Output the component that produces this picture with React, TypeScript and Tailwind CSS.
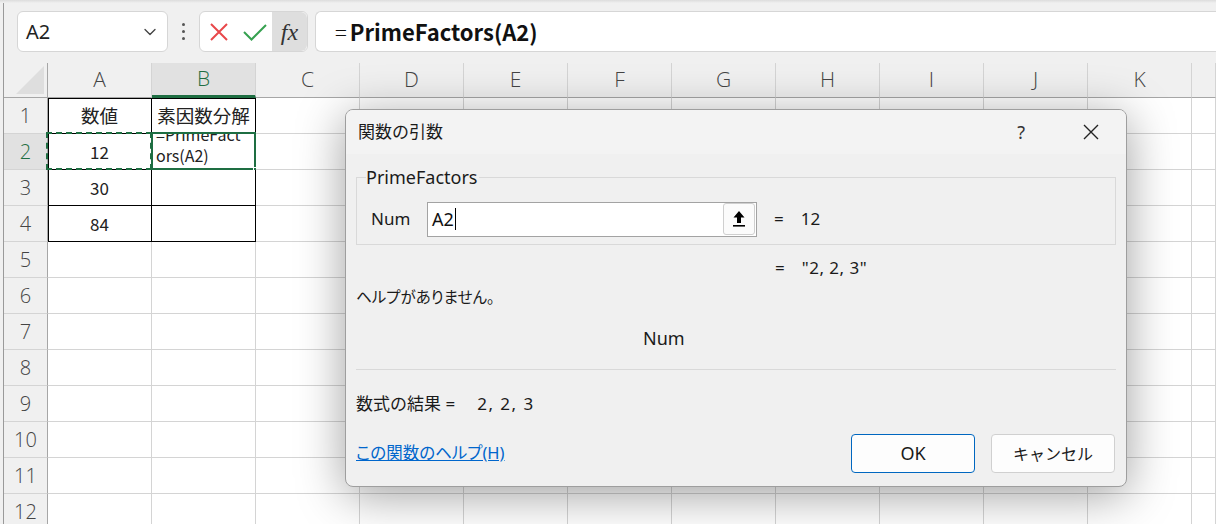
import { ChevronDown } from "lucide-react"

const COLS = ["A", "B", "C", "D", "E", "F", "G", "H", "I", "J", "K", ""]
const ROWS = [1, 2, 3, 4, 5, 6, 7, 8, 9, 10, 11, 12]

const VALUES: Record<string, string> = {
  A1: "数値",
  B1: "素因数分解",
  A2: "12",
  A3: "30",
  A4: "84",
}

const JP = "font-['Noto_Sans','Noto_Sans_CJK_JP',sans-serif]"
const CELL_FONT = "font-['Noto_Sans_CJK_JP','Noto_Sans',sans-serif]"

function Toolbar() {
  return (
    <div className="flex h-[63px] items-start gap-0 pt-[11px] pl-[13px]">
      {/* name box */}
      <div className="flex h-[41px] w-[151px] items-center justify-between rounded-md border border-[#d6d6d6] bg-white pl-[8px] pr-[7px]">
        <span className="font-['Noto_Sans',sans-serif] text-[20px] text-[#222]">A2</span>
        <ChevronDown className="size-[20px] text-[#444]" strokeWidth={1.6} />
      </div>
      <div className="flex h-[41px] w-[31px] flex-col items-center justify-center gap-[4px]">
        <span className="size-[3px] rounded-full bg-[#555]" />
        <span className="size-[3px] rounded-full bg-[#555]" />
        <span className="size-[3px] rounded-full bg-[#555]" />
      </div>
      {/* cancel / enter / fx */}
      <div className="flex h-[41px] w-[109px] items-center rounded-md border border-[#d6d6d6] bg-white">
        <div className="flex w-[38px] justify-center">
          <svg width="22" height="22" viewBox="0 0 22 22">
            <path d="M3 3 L19 19 M19 3 L3 19" stroke="#e8474a" strokeWidth="2" fill="none" />
          </svg>
        </div>
        <div className="flex w-[34px] justify-center">
          <svg width="26" height="20" viewBox="0 0 26 20">
            <path d="M2 10 L9.5 17.5 L24 3" stroke="#36a150" strokeWidth="2" fill="none" />
          </svg>
        </div>
        <div className="flex h-[39px] w-[35px] items-center justify-center rounded-r-md bg-[#dedede]">
          <span className="font-['Liberation_Serif',serif] text-[24px] italic leading-none text-[#333]">fx</span>
        </div>
      </div>
      {/* formula input */}
      <div className="ml-[7px] flex h-[41px] flex-1 items-center rounded-l-md border border-r-0 border-[#d6d6d6] bg-white pl-[19px]">
        <span className="font-['Noto_Sans_CJK_JP',sans-serif] text-[22px] text-[#111]">
          <span className="mr-[3px] font-light">=</span>
          <span className="font-bold">PrimeFactors(A2)</span>
        </span>
      </div>
    </div>
  )
}

function Sheet() {
  return (
    <div className="grid grid-cols-[44px_repeat(11,104px)_1fr] grid-rows-[35px_repeat(12,36px)]">
      {/* corner */}
      <div className="flex items-end justify-end border-r border-b border-[#a6a6a6] bg-[#f0f0f0] pr-[3px] pb-[3px]">
        <div className="size-[28px] bg-[#dedede] [clip-path:polygon(100%_0,100%_100%,0_100%)]" />
      </div>
      {COLS.map((c, i) => {
        const sel = c === "B"
        return (
          <div
            key={"h" + i}
            className={
              "flex items-center justify-center border-r border-[#d4d4d4] font-['Open_Sans',sans-serif] text-[21px] font-light " +
              (sel
                ? "border-b-[3px] border-b-[#1e6e42] bg-[#e1e1e1] text-[#1e6e42]"
                : "border-b border-b-[#a6a6a6] bg-[#f0f0f0] text-[#444]")
            }
          >
            {c}
          </div>
        )
      })}
      {ROWS.map((r) => (
        <Row key={r} r={r} />
      ))}
    </div>
  )
}

function Row({ r }: { r: number }) {
  const sel = r === 2
  return (
    <>
      <div
        className={
          "flex items-center justify-center border-r border-b border-r-[#a6a6a6] border-b-[#d4d4d4] font-['Open_Sans',sans-serif] text-[20px] font-light " +
          (sel ? "bg-[#e1e1e1] text-[#1e6e42]" : "bg-[#f0f0f0] text-[#444]")
        }
      >
        {r}
      </div>
      {COLS.map((c, i) => {
        const key = c + r
        const inTable = r <= 4 && i <= 1
        let edge = ""
        if (inTable) {
          if (i === 0 && r === 1) edge = "shadow-[inset_1px_1px_0_#000]"
          else if (i === 0) edge = "shadow-[inset_1px_0_0_#000]"
          else if (r === 1) edge = "shadow-[inset_0_1px_0_#000]"
        }
        const isHead = r === 1 && inTable
        return (
          <div
            key={key}
            className={
              "relative flex items-center justify-center border-r border-b bg-white " +
              (inTable ? "border-black " : "border-[#d4d4d4] ") +
              edge
            }
          >
            {key === "B2" ? (
              <>
                <div className={"absolute inset-0 flex flex-col justify-end overflow-hidden pl-[4px] pb-[3px] text-[16px] leading-[21px] text-[#222] " + CELL_FONT}>
                  <span>=PrimeFact</span>
                  <span>ors(A2)</span>
                </div>
                <div className="absolute -top-[2px] -left-[1px] -right-[1px] -bottom-[1px] border-2 border-[#1e6e42]" />
                <div className="absolute -right-[4px] -bottom-[4px] size-[6px] border border-white bg-[#1e6e42]" />
              </>
            ) : (
              <span className={(isHead ? "text-[18.5px] " : "text-[17px] ") + "text-[#222] " + CELL_FONT}>
                {VALUES[key] ?? ""}
              </span>
            )}
            {key === "A2" && (
              <div className="absolute -top-[2px] -left-[2px] -right-[1px] -bottom-[1px] border-2 border-dashed border-[#1e6e42]" />
            )}
          </div>
        )
      })}
    </>
  )
}

function Dialog() {
  return (
    <div
      className={
        "absolute left-[345px] top-[109px] flex h-[378px] w-[782px] flex-col overflow-hidden rounded-lg border border-[#9e9e9e] bg-[#f0f0f0] shadow-[0_8px_48px_rgba(0,0,0,0.38)] " +
        JP
      }
    >
      {/* title bar */}
      <div className="flex h-[44px] shrink-0 items-center bg-[#f3f3f3] pl-[12px]">
        <span className="text-[17px] text-[#1a1a1a]">関数の引数</span>
        <span className="ml-auto mr-[58px] text-[18px] text-[#333]">?</span>
        <svg width="16" height="16" viewBox="0 0 16 16" className="mr-[27px]">
          <path d="M1 1 L15 15 M15 1 L1 15" stroke="#222" strokeWidth="1.4" fill="none" />
        </svg>
      </div>

      <div className="flex flex-1 flex-col px-[10px]">
        {/* group box */}
        <div className="relative mt-[23px] h-[68px] shrink-0 border border-[#d9d9d9]">
          <span className="absolute -top-[13px] left-[9px] bg-[#f0f0f0] pr-[2px] text-[18px] leading-[24px] text-[#1a1a1a]">
            PrimeFactors
          </span>
          <div className="flex h-full items-center pt-[16px] pl-[14px]">
            <span className="w-[56px] text-[17px] text-[#1a1a1a]">Num</span>
            <div className="flex h-[35px] w-[330px] items-center border border-[#a3a3a3] bg-white pl-[4px] pr-px">
              <span className="text-[18px] text-[#111]">A2</span>
              <span className="ml-px h-[22px] w-px bg-black" />
              <div className="ml-auto flex h-[32px] w-[32px] items-center justify-center rounded-[3px] border border-[#cfcfcf] bg-[#fbfbfb]">
                <svg width="14" height="18" viewBox="0 0 14 18">
                  <path d="M7 1 L1.5 7.5 H5 V13 H9 V7.5 H12.5 Z" fill="#000" />
                  <rect x="1" y="15" width="12" height="1.6" fill="#000" />
                </svg>
              </div>
            </div>
            <span className="ml-[17px] text-[17px] text-[#1a1a1a]">=</span>
            <span className="ml-[17px] text-[17px] text-[#1a1a1a]">12</span>
          </div>
        </div>

        <div className="mt-[12px] flex h-[22px] items-center pl-[419px] text-[17px] text-[#1a1a1a]">
          <span>=</span>
          <span className="ml-[17px] tracking-[0.5px]">"2, 2, 3"</span>
        </div>

        <div className="mt-[8px] flex h-[22px] items-center text-[15.5px] text-[#1a1a1a] [font-feature-settings:'palt']">
          ヘルプがありません。
        </div>

        <div className="mt-[18px] flex h-[22px] items-center pl-[287px] text-[18px] text-[#1a1a1a]">Num</div>

        <div className="mt-[20px] h-px shrink-0 bg-[#d9d9d9]" />

        <div className="mt-[23px] flex h-[22px] items-center text-[17px] text-[#1a1a1a]">
          <span>数式の結果 =</span>
          <span className="ml-[22px] tracking-[1.5px]">2, 2, 3</span>
        </div>

        <div className="mt-[19px] flex h-[39px] items-center">
          <a className="text-[16.5px] text-[#0066cc] underline [font-feature-settings:'palt']">この関数のヘルプ(H)</a>
          <button className="ml-auto flex h-[39px] w-[124px] items-center justify-center rounded-[4px] border border-[#0067c0] bg-[#fdfdfd] text-[18px] text-[#1a1a1a]">
            OK
          </button>
          <button className="ml-[16px] mr-[1px] flex h-[39px] w-[124px] items-center justify-center rounded-[4px] border border-[#d0d0d0] bg-[#fdfdfd] text-[16px] text-[#1a1a1a]">
            キャンセル
          </button>
        </div>
      </div>
    </div>
  )
}

export default function App() {
  return (
    <div className="relative h-[524px] w-[1216px] overflow-hidden bg-[#f0f0f0] pl-[3px]">
      <div className="absolute inset-x-0 top-0 h-[3px] bg-gradient-to-b from-[#dcdcdc] to-[#f0f0f0]" />
      <div className="h-full border-l border-[#9a9a9a]">
        <Toolbar />
        <Sheet />
      </div>
      <Dialog />
    </div>
  )
}
